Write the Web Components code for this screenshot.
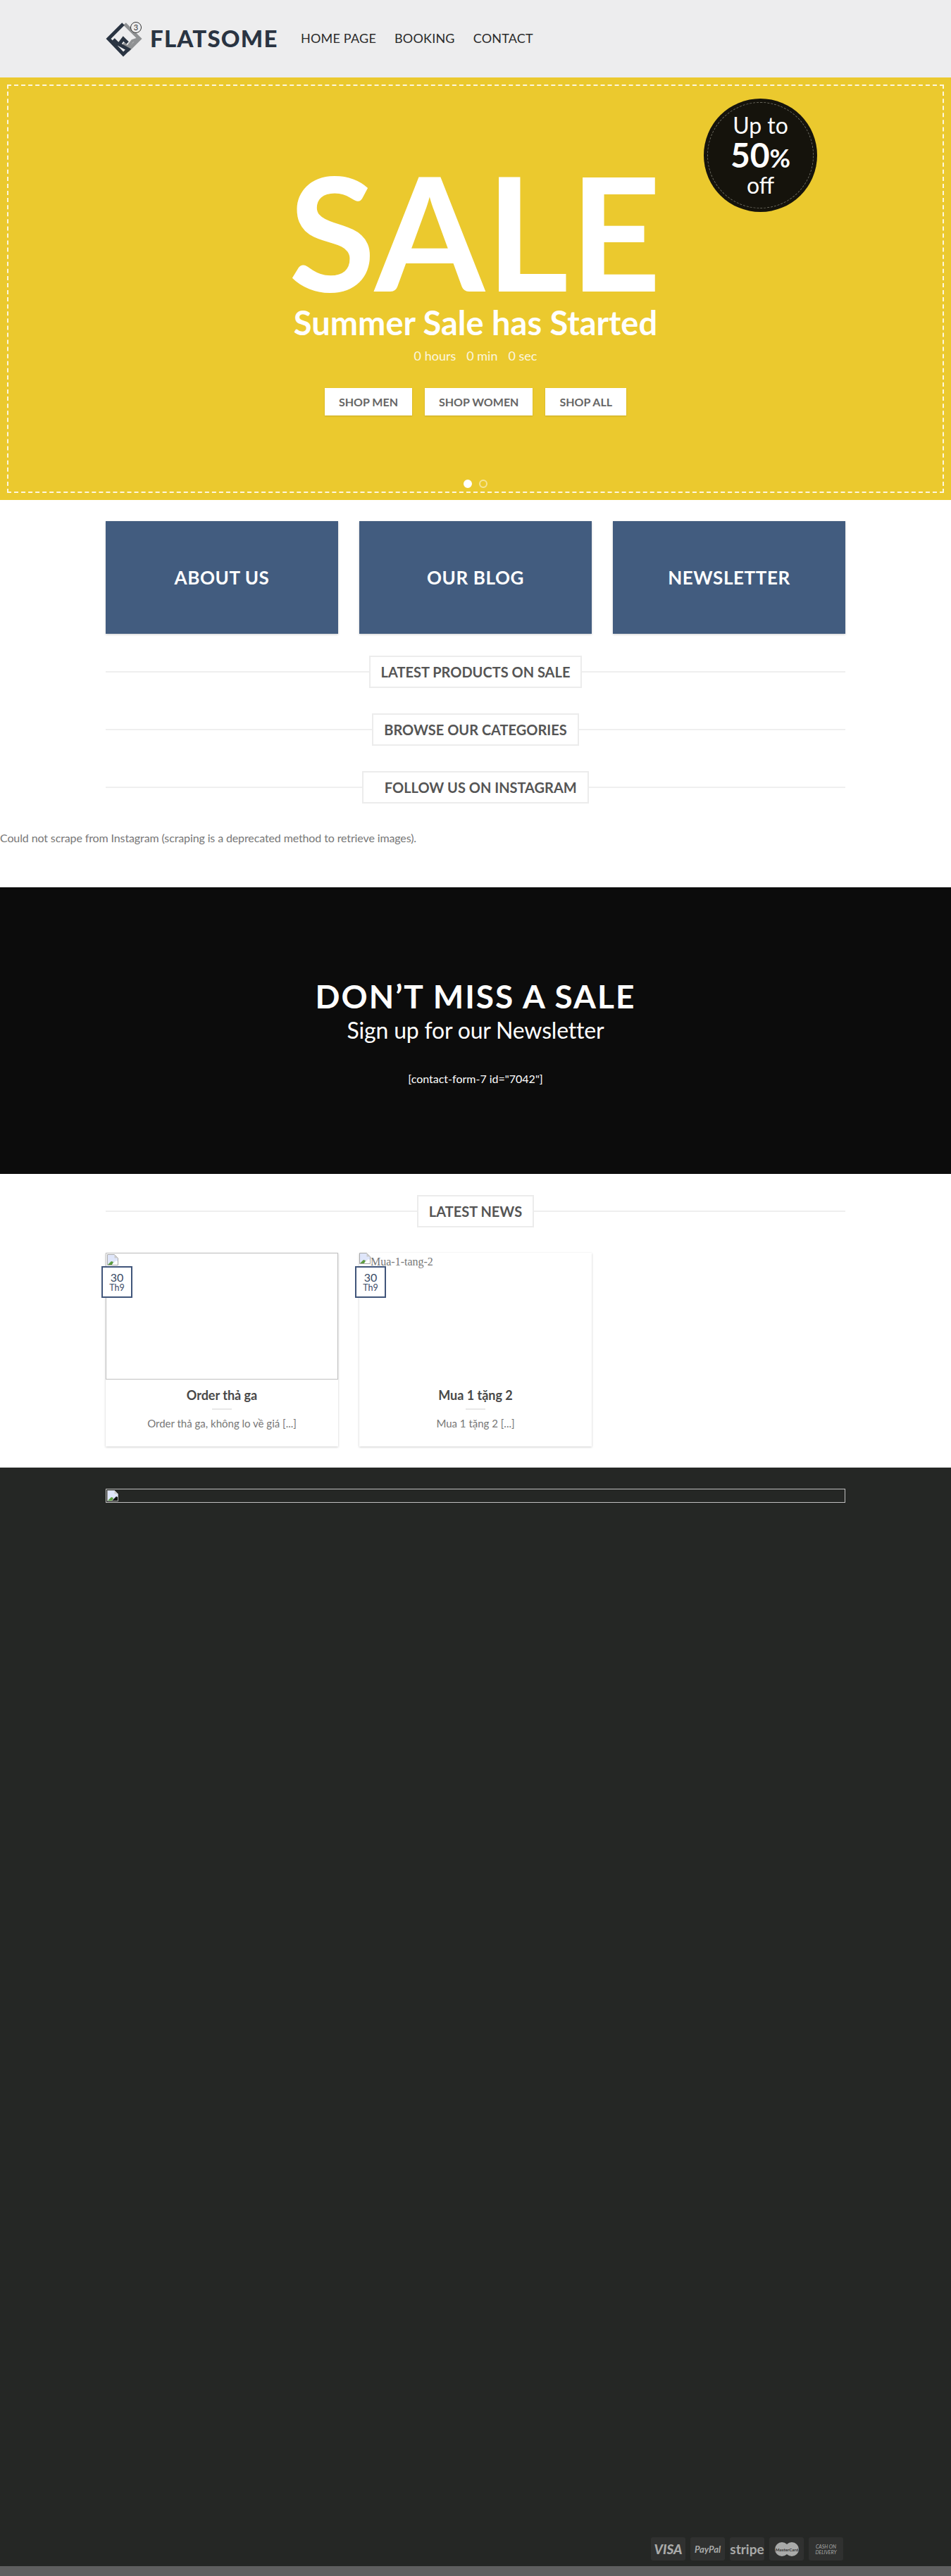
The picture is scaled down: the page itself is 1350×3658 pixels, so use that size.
<!DOCTYPE html>
<html lang="en">
  <head>
    <meta charset="UTF-8" />
    <title>Flatsome</title>
    <style>
      body {
        margin: 0;
        background: #fff;
        font-family: Lato, "Noto Sans", sans-serif;
      }
    </style>
  </head>

  <body>
    <template id="site-header-template">
      <style>
        :host { display: block; height: 110px; background: #ededee; }
        .wrap { width: 1050px; margin: 0 auto; height: 108px; display: flex; align-items: center; }
        .logo { display: flex; align-items: center; width: 277px; flex: none; }
        .logo svg { width: 54px; height: 54px; flex: none; margin-top: 2px; }
        .logo span { font-size: 33px; font-weight: 900; color: #2a3442; letter-spacing: 1.2px; margin-left: 9px; }
        nav { display: flex; gap: 26px; }
        ::slotted(a) { font-size: 18px; color: #2b2b2b; letter-spacing: .2px; }
      </style>
      <div class="wrap">
        <div class="logo">
          <svg viewBox="0 0 54 54" fill="none" stroke-width="5">
            <path d="M27 6 L48 27 L31 44" stroke="#8f9193" />
            <path d="M25 34 L31 39 L38 30 L47 27" stroke="#8f9193" stroke-width="4" />
            <path d="M25 6 L4 27 L25 49 L32 42 L19 35 L25 27 L31 33" stroke="#2a3442" />
            <path d="M11 28 L18 35" stroke="#2a3442" />
            <circle cx="43" cy="11" r="7.5" fill="#ededee" stroke="#333" stroke-width="1" />
            <text x="43" y="15" font-size="11" text-anchor="middle" fill="#333" stroke="none" font-family="Lato">3</text>
          </svg>
          <span>FLATSOME</span>
        </div>
        <nav><slot></slot></nav>
      </div>
    </template>

    <template id="hero-banner-template">
      <style>
        :host { display: block; position: relative; height: 600px; background: #ebc92e; color: #fff; text-align: center; overflow: hidden; }
        .dash { position: absolute; left: 10px; right: 10px; top: 10px; bottom: 10px; border: 2px dashed #fdf6dc; }
        .badge { position: absolute; left: 999px; top: 30px; width: 161px; height: 161px; border-radius: 50%; background: #15130c; display: flex; flex-direction: column; align-items: center; justify-content: center; }
        .badge::before { content: ""; position: absolute; inset: 5px; border-radius: 50%; border: 1.5px dashed #6b695f; }
        .badge div { line-height: 1; }
        .up { font-size: 32px; }
        .pct { font-size: 48px; font-weight: 700; margin: 2px 0 3px; }
        .pct small { font-size: 36px; }
        .off { font-size: 32px; }
        .content { padding-top: 105px; }
        h1 { margin: 0; font-size: 225px; line-height: 225px; font-weight: 700; letter-spacing: 2px; height: 215px; }
        h2 { margin: 0; font-size: 47px; line-height: 56px; font-weight: 700; }
        .count { font-size: 18px; line-height: 24px; margin-top: 7px; opacity: .85; display: flex; justify-content: center; gap: 15px; }
        .btns { display: flex; justify-content: center; gap: 18px; margin-top: 34px; }
        .dots { position: absolute; left: 658px; top: 571px; display: flex; gap: 10px; }
        .dots i { display: block; width: 12px; height: 12px; border-radius: 50%; border: 2px solid #fff; box-sizing: border-box; opacity: .5; }
        .dots i:first-child { background: #fff; opacity: 1; }
      </style>
      <div class="dash"></div>
      <div class="badge">
        <div class="up">Up to</div>
        <div class="pct">50<small>%</small></div>
        <div class="off">off</div>
      </div>
      <div class="content">
        <h1>SALE</h1>
        <h2>Summer Sale has Started</h2>
        <div class="count"><span>0 hours</span><span>0 min</span><span>0 sec</span></div>
        <div class="btns"><slot></slot></div>
      </div>
      <div class="dots"><i></i><i></i></div>
    </template>

    <template id="shop-button-template">
      <style>
        :host { display: block; height: 39px; line-height: 39px; padding: 0 20px; background: #fff; color: #666; font-size: 16px; font-weight: 700; box-shadow: 0 1px 2px rgba(0,0,0,.15); }
      </style>
      <slot></slot>
    </template>

    <template id="promo-box-template">
      <style>
        :host { display: flex; align-items: center; justify-content: center; height: 160px; background: #425c7f; color: #fff; font-size: 26px; font-weight: 700; letter-spacing: .6px; box-shadow: 0 1px 3px rgba(0,0,0,.2); }
      </style>
      <slot></slot>
    </template>

    <template id="section-title-template">
      <style>
        :host { display: flex; align-items: center; width: 1050px; margin: 0 auto; height: 46px; }
        :host::before, :host::after { content: ""; flex: 1; height: 2px; background: #efefef; }
        div { height: 42px; line-height: 43px; padding: 0 15px; border: 2px solid #ececec; color: #555; font-size: 20px; font-weight: 700; white-space: nowrap; background: #fff; }
      </style>
      <div><slot></slot></div>
    </template>

    <template id="news-card-template">
      <style>
        :host { display: block; position: relative; height: 275px; background: #fff; box-shadow: 0 1px 3px rgba(0,0,0,.2); }
        .img { height: 180px; box-sizing: border-box; font-family: "Liberation Serif", serif; font-size: 16px; color: #777; line-height: 26px; }
        :host([border]) .img { border: 1px solid #c0c0c0; padding: 1px; }
        .img svg { width: 16px; height: 16px; vertical-align: top; }
        .badge { position: absolute; left: -6px; top: 19px; width: 44px; height: 45px; box-sizing: border-box; border: 2px solid #40557a; background: #fff; text-align: center; color: #3a4b66; }
        .badge b { display: block; font-weight: 400; font-size: 16px; line-height: 16px; margin-top: 6px; }
        .badge span { display: block; font-size: 12.5px; line-height: 14px; margin-top: 0; }
        .body { text-align: center; }
        h3 { margin: 0; padding-top: 9px; font-size: 18px; line-height: 26px; font-weight: 700; color: #484848; }
        hr { width: 28px; height: 2px; border: 0; background: #e8e8e8; margin: 6px auto 0; }
        p { margin: 8px 0 0; font-size: 15px; line-height: 22px; color: #777; }
      </style>
      <div class="img">
        <svg viewBox="0 0 16 16"><path d="M.5.5h10l5 5v10H.5z" fill="#dfe6fa" stroke="#a8a8a8" /><path d="M1 15l5-5 3 1-2 4z" fill="#5d9c3f" /><path d="M7 15l6-6 2 1v5z" fill="#fff" /><path d="M10.5.5v5h5z" fill="#ccc" /></svg><slot name="alt"></slot>
      </div>
      <div class="badge"><b><slot name="day"></slot></b><span><slot name="month"></slot></span></div>
      <div class="body">
        <h3><slot name="title"></slot></h3>
        <hr />
        <p><slot name="excerpt"></slot></p>
      </div>
    </template>

    <template id="pay-icon-template">
      <style>
        :host { display: flex; align-items: center; justify-content: center; width: 49px; height: 33px; background: #303130; border-radius: 3px; color: #a9aaa9; text-align: center; }
      </style>
      <slot></slot>
    </template>

    <template id="site-footer-template">
      <style>
        :host { display: block; }
        .dark { height: 1560px; box-sizing: border-box; background: #252725; padding-top: 30px; position: relative; }
        .ph { width: 1050px; height: 20px; margin: 0 auto; box-sizing: border-box; border: 1px solid #c0c0c0; padding: 1px; }
        .ph svg { width: 16px; height: 16px; display: block; }
        .pay { position: absolute; left: 924px; top: 1519px; display: flex; gap: 7px; }
        .bottom { height: 14px; background: #5f5f5f; }
      </style>
      <div class="dark">
        <div class="ph"><svg viewBox="0 0 16 16"><path d="M.5.5h10l5 5v10H.5z" fill="#dfe6fa" stroke="#a8a8a8" /><path d="M1 15l5-5 3 1-2 4z" fill="#5d9c3f" /><path d="M7 15l6-6 2 1v5z" fill="#111" /><path d="M10.5.5v5h5z" fill="#ccc" /></svg></div>
        <div class="pay"><slot></slot></div>
      </div>
      <div class="bottom"></div>
    </template>

    <template id="home-page-template">
      <style>
        :host { display: block; }
        .boxes { display: grid; grid-template-columns: repeat(3, 330px); gap: 30px; width: 1050px; margin: 0 auto; padding-top: 30px; }
        .titles { display: flex; flex-direction: column; gap: 36px; margin-top: 31px; }
        .msg { margin: 0; padding-top: 37px; height: 82px; font-size: 16px; line-height: 24px; color: #777; letter-spacing: -.12px; }
        .signup { height: 407px; box-sizing: border-box; background: #0c0c0c; color: #fff; text-align: center; padding-top: 129px; }
        .signup h2 { margin: 0; font-size: 46px; line-height: 52px; font-weight: 700; letter-spacing: 2px; }
        .signup h3 { margin: 2px 0 0; font-size: 32px; line-height: 40px; font-weight: 400; letter-spacing: -.2px; }
        .signup p { margin: 37px 0 0; font-size: 16px; line-height: 24px; }
        .news { padding-top: 30px; height: 417px; box-sizing: border-box; }
        .cards { display: grid; grid-template-columns: repeat(3, 330px); gap: 30px; width: 1050px; margin: 36px auto 0; }
      </style>
      <slot name="top"></slot>
      <div class="boxes"><slot name="box"></slot></div>
      <div class="titles"><slot name="title"></slot></div>
      <p class="msg"><slot name="msg"></slot></p>
      <div class="signup">
        <h2><slot name="signup-h"></slot></h2>
        <h3><slot name="signup-s"></slot></h3>
        <p><slot name="signup-f"></slot></p>
      </div>
      <div class="news">
        <slot name="news-title"></slot>
        <div class="cards"><slot name="card"></slot></div>
      </div>
      <slot name="footer"></slot>
    </template>

    <home-page>
      <div slot="top">
        <site-header>
          <a>HOME PAGE</a><a>BOOKING</a><a>CONTACT</a>
        </site-header>
        <hero-banner>
          <shop-button>SHOP MEN</shop-button>
          <shop-button>SHOP WOMEN</shop-button>
          <shop-button>SHOP ALL</shop-button>
        </hero-banner>
      </div>

      <promo-box slot="box">ABOUT US</promo-box>
      <promo-box slot="box">OUR BLOG</promo-box>
      <promo-box slot="box">NEWSLETTER</promo-box>

      <section-title slot="title">LATEST PRODUCTS ON SALE</section-title>
      <section-title slot="title">BROWSE OUR CATEGORIES</section-title>
      <section-title slot="title">&nbsp;&nbsp;&nbsp;FOLLOW US ON INSTAGRAM</section-title>

      <span slot="msg">Could not scrape from Instagram (scraping is a deprecated method to retrieve images).</span>

      <span slot="signup-h">DON’T MISS A SALE</span>
      <span slot="signup-s">Sign up for our Newsletter</span>
      <span slot="signup-f">[contact-form-7 id="7042"]</span>

      <section-title slot="news-title">LATEST NEWS</section-title>

      <news-card slot="card" border>
        <span slot="day">30</span><span slot="month">Th9</span>
        <span slot="title">Order thả ga</span>
        <span slot="excerpt">Order thả ga, không lo về giá [...]</span>
      </news-card>
      <news-card slot="card">
        <span slot="alt">Mua-1-tang-2</span>
        <span slot="day">30</span><span slot="month">Th9</span>
        <span slot="title">Mua 1 tặng 2</span>
        <span slot="excerpt">Mua 1 tặng 2 [...]</span>
      </news-card>

      <site-footer slot="footer">
        <pay-icon><b style="font-size: 19px; font-style: italic; font-weight: 900">VISA</b></pay-icon>
        <pay-icon><b style="font-size: 13px; font-style: italic">PayPal</b></pay-icon>
        <pay-icon><b style="font-size: 19px">stripe</b></pay-icon>
        <pay-icon>
          <svg width="36" height="22" viewBox="0 0 36 22"><circle cx="11" cy="11" r="10" fill="#a9aaa9" /><circle cx="25" cy="11" r="10" fill="#a9aaa9" /><text x="18" y="13.5" font-size="6.2" font-weight="700" text-anchor="middle" fill="#303130" font-family="Lato">MasterCard</text></svg>
        </pay-icon>
        <pay-icon><i style="font-size: 7px; line-height: 8px">CASH ON<br />DELIVERY</i></pay-icon>
      </site-footer>
    </home-page>

    <script>
      function define(name) {
        const template = document.querySelector("#" + name + "-template");
        customElements.define(
          name,
          class extends HTMLElement {
            constructor() {
              super();
              const shadowRoot = this.attachShadow({ mode: "open" });
              shadowRoot.appendChild(template.content.cloneNode(true));
            }
          }
        );
      }
      [
        "site-header",
        "hero-banner",
        "shop-button",
        "promo-box",
        "section-title",
        "news-card",
        "pay-icon",
        "site-footer",
        "home-page",
      ].forEach(define);
    </script>
  </body>
</html>
